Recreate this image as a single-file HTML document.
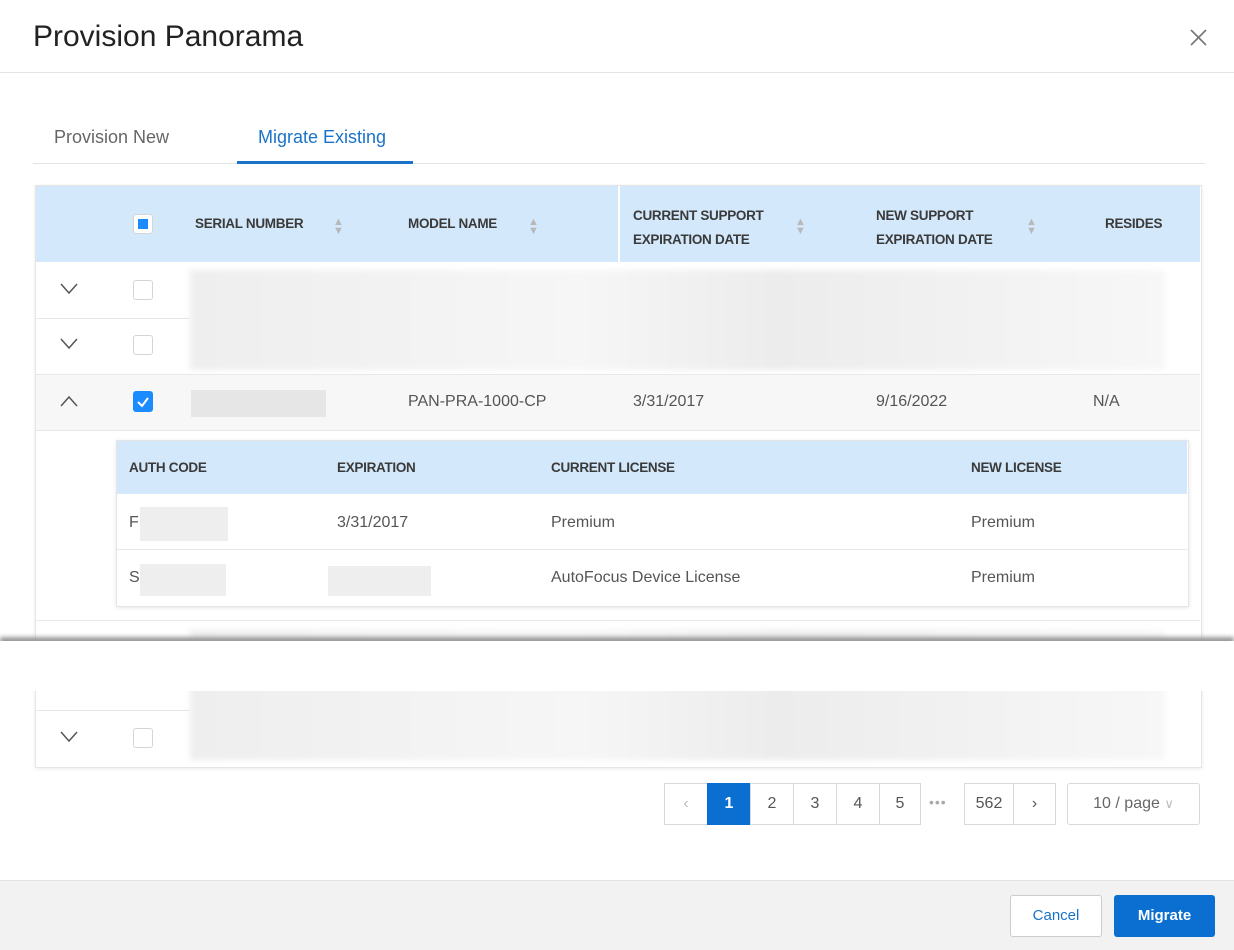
<!DOCTYPE html>
<html><head><style>
body{margin:0;width:1234px;height:949px;background:#fff;font-family:"Liberation Sans",sans-serif;position:relative;overflow:hidden;color:#444}
.a{position:absolute}
.blur{background:linear-gradient(90deg,#eee,#f6f6f6 40%,#ececec 60%,#f7f7f7);filter:blur(3px)}
.hd{font-size:13.5px;font-weight:bold;color:#3a3a3a;letter-spacing:-0.3px}
.cb{width:20px;height:20px;border:1px solid #d5d5d5;border-radius:3px;background:#fff;box-sizing:border-box}
.t{font-size:16px;color:#555}
.pg{top:783px;height:42px;border:1px solid #d9d9d9;box-sizing:border-box;font-size:16px;color:#555;text-align:center;line-height:40px;background:#fff}
.ch{position:absolute;width:18px;height:12px}
</style></head><body>
<div class="a" style="left:33px;top:20px;font-size:30px;color:#222">Provision Panorama</div>
<svg class="a" style="left:1190px;top:29px" width="17" height="17"><path d="M1 1L16 16M16 1L1 16" stroke="#777" stroke-width="1.6"/></svg>
<div class="a" style="left:0;top:72px;width:1234px;height:1px;background:#e3e3e3"></div>
<div class="a" style="left:54px;top:127px;font-size:18px;color:#666">Provision New</div>
<div class="a" style="left:258px;top:127px;font-size:18px;color:#1a73c8">Migrate Existing</div>
<div class="a" style="left:33px;top:163px;width:1172px;height:1px;background:#e3e3e3"></div>
<div class="a" style="left:237px;top:161px;width:176px;height:3px;background:#1a73c8"></div>

<div class="a" style="left:35px;top:185px;width:1165px;height:581px;border:1px solid #e5e5e5;box-shadow:0 1px 4px rgba(0,0,0,.08)"></div>
<div class="a" style="left:36px;top:186px;width:1164px;height:76px;background:#d3e8fb"></div>
<div class="a" style="left:618px;top:186px;width:2px;height:76px;background:#fff"></div>
<div class="a cb" style="left:133px;top:214px;padding:4px"><div style="width:10px;height:10px;background:#1a8cff"></div></div>
<div class="a hd" style="left:195px;top:216px">SERIAL NUMBER</div>
<div class="a hd" style="left:408px;top:216px">MODEL NAME</div>
<div class="a hd" style="left:633px;top:204px;line-height:24px">CURRENT SUPPORT<br>EXPIRATION DATE</div>
<div class="a hd" style="left:876px;top:204px;line-height:24px">NEW SUPPORT<br>EXPIRATION DATE</div>
<div class="a hd" style="left:1105px;top:216px">RESIDES</div>
<div class="a" style="left:333px;top:218px;font-size:11px;color:#b8b8b8;line-height:9px">▲<br>▼</div>
<div class="a" style="left:528px;top:218px;font-size:11px;color:#b8b8b8;line-height:9px">▲<br>▼</div>
<div class="a" style="left:795px;top:218px;font-size:11px;color:#b8b8b8;line-height:9px">▲<br>▼</div>
<div class="a" style="left:1026px;top:218px;font-size:11px;color:#b8b8b8;line-height:9px">▲<br>▼</div>

<div class="a" style="left:36px;top:318px;width:154px;height:1px;background:#e8e8e8"></div>
<div class="a blur" style="left:190px;top:270px;width:975px;height:100px"></div>
<svg class="ch" style="left:60px;top:283px"><path d="M1 1L9 10L17 1" fill="none" stroke="#555" stroke-width="1.5"/></svg>
<div class="a cb" style="left:133px;top:280px"></div>
<svg class="ch" style="left:60px;top:338px"><path d="M1 1L9 10L17 1" fill="none" stroke="#555" stroke-width="1.5"/></svg>
<div class="a cb" style="left:133px;top:335px"></div>
<div class="a" style="left:36px;top:374px;width:1164px;height:55px;background:#f7f7f7;border-top:1px solid #e8e8e8;border-bottom:1px solid #e8e8e8"></div>
<svg class="ch" style="left:60px;top:395px"><path d="M1 11L9 2L17 11" fill="none" stroke="#555" stroke-width="1.5"/></svg>
<div class="a" style="left:133px;top:391px;width:20px;height:21px;border-radius:3px;background:#1a8cff"><svg width="20" height="21"><path d="M5 11L9 15L15 7" fill="none" stroke="#fff" stroke-width="2"/></svg></div>
<div class="a" style="left:191px;top:390px;width:135px;height:27px;background:#e6e6e6"></div>
<div class="a t" style="left:408px;top:393px">PAN-PRA-1000-CP</div>
<div class="a t" style="left:633px;top:393px">3/31/2017</div>
<div class="a t" style="left:876px;top:393px">9/16/2022</div>
<div class="a t" style="left:1093px;top:393px">N/A</div>

<div class="a" style="left:116px;top:440px;width:1071px;height:165px;border:1px solid #e5e5e5;box-shadow:0 1px 4px rgba(0,0,0,.1)"></div>
<div class="a" style="left:117px;top:441px;width:1070px;height:53px;background:#d3e8fb"></div>
<div class="a hd" style="left:129px;top:460px">AUTH CODE</div>
<div class="a hd" style="left:337px;top:460px">EXPIRATION</div>
<div class="a hd" style="left:551px;top:460px">CURRENT LICENSE</div>
<div class="a hd" style="left:971px;top:460px">NEW LICENSE</div>
<div class="a t" style="left:129px;top:514px">F</div>
<div class="a" style="left:140px;top:507px;width:88px;height:34px;background:#eee"></div>
<div class="a t" style="left:337px;top:514px">3/31/2017</div>
<div class="a t" style="left:551px;top:514px">Premium</div>
<div class="a t" style="left:971px;top:514px">Premium</div>
<div class="a" style="left:117px;top:549px;width:1070px;height:1px;background:#e8e8e8"></div>
<div class="a t" style="left:129px;top:569px">S</div>
<div class="a" style="left:140px;top:564px;width:86px;height:32px;background:#eee"></div>
<div class="a" style="left:328px;top:566px;width:103px;height:30px;background:#eee"></div>
<div class="a t" style="left:551px;top:569px">AutoFocus Device License</div>
<div class="a t" style="left:971px;top:569px">Premium</div>

<div class="a" style="left:36px;top:620px;width:1164px;height:1px;background:#e8e8e8"></div>
<div class="a blur" style="left:190px;top:630px;width:975px;height:130px"></div>
<div class="a" style="left:0;top:637px;width:1234px;height:8px;background:#999;filter:blur(2px)"></div>
<div class="a" style="left:0;top:641px;width:1234px;height:50px;background:#fff"></div>
<div class="a" style="left:36px;top:710px;width:154px;height:1px;background:#e8e8e8"></div>
<svg class="ch" style="left:60px;top:731px"><path d="M1 1L9 10L17 1" fill="none" stroke="#555" stroke-width="1.5"/></svg>
<div class="a cb" style="left:133px;top:728px"></div>

<div class="a pg" style="left:664px;width:44px;color:#bbb">‹</div>
<div class="a pg" style="left:707px;width:44px;background:#0a6fd1;border-color:#0a6fd1;color:#fff;font-weight:bold">1</div>
<div class="a pg" style="left:750px;width:44px">2</div>
<div class="a pg" style="left:793px;width:44px">3</div>
<div class="a pg" style="left:836px;width:44px">4</div>
<div class="a pg" style="left:879px;width:42px">5</div>
<div class="a" style="left:929px;top:794px;color:#aaa;font-size:14px;letter-spacing:1px">•••</div>
<div class="a pg" style="left:964px;width:50px">562</div>
<div class="a pg" style="left:1013px;width:43px">›</div>
<div class="a pg" style="left:1067px;width:133px;border-radius:3px;color:#666">10 / page <span style="color:#bbb;font-size:13px">∨</span></div>

<div class="a" style="left:0;top:880px;width:1234px;height:69px;background:#f2f2f2;border-top:1px solid #e3e3e3"></div>
<div class="a" style="left:1010px;top:895px;width:92px;height:42px;border:1px solid #ccc;border-radius:3px;background:#fff;box-sizing:border-box;text-align:center;line-height:40px;color:#1a73c8;font-size:15px">Cancel</div>
<div class="a" style="left:1114px;top:895px;width:101px;height:42px;border-radius:3px;background:#0a6fd1;text-align:center;line-height:42px;color:#fff;font-size:15px;font-weight:bold">Migrate</div>
</body></html>
